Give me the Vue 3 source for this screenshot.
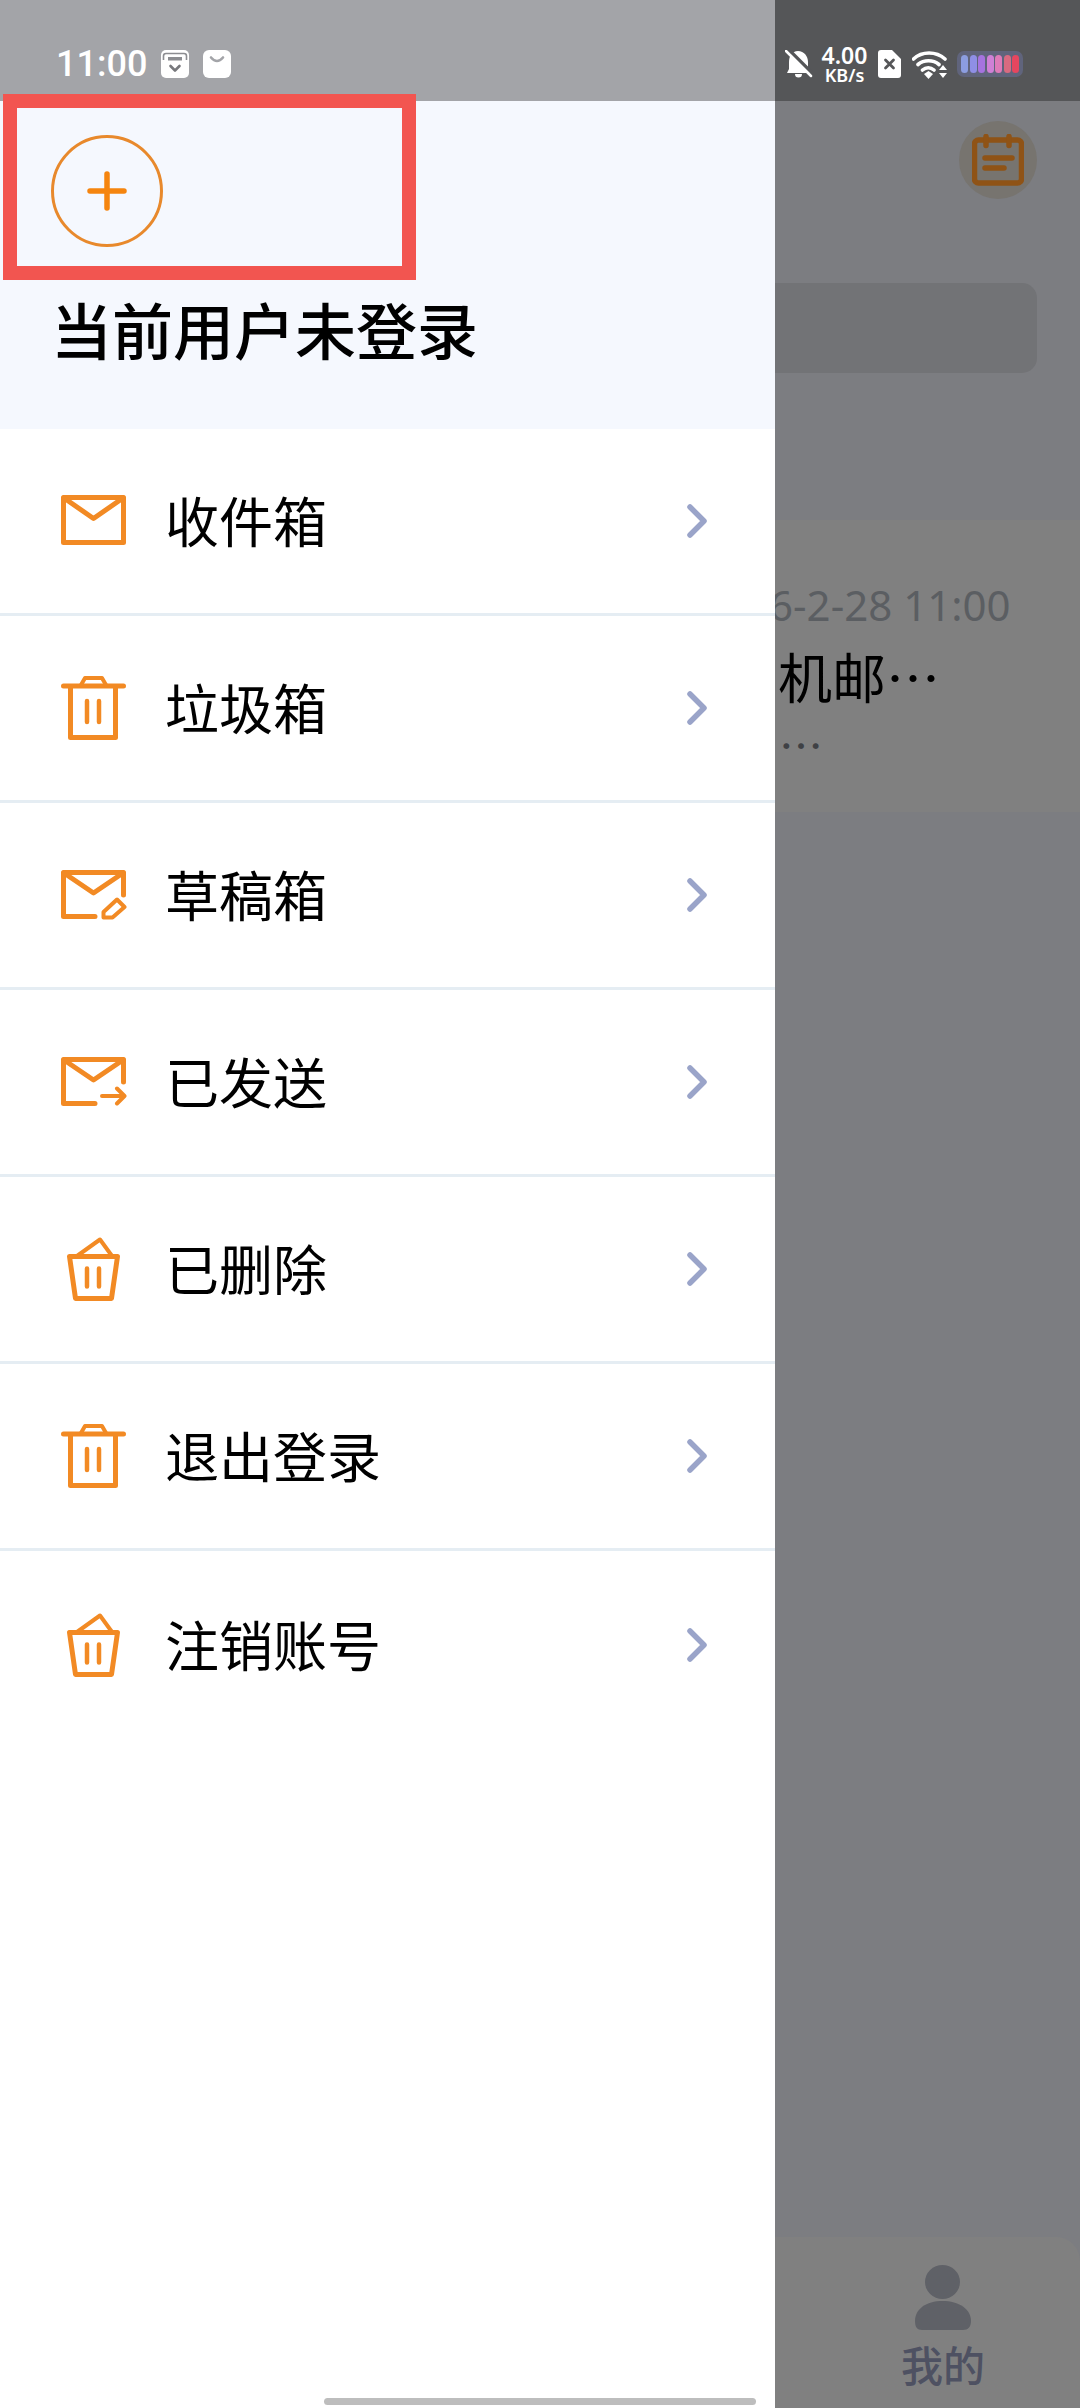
<script setup>
const menu = [
  { label: '收件箱', icon: 'mail' },
  { label: '垃圾箱', icon: 'trash' },
  { label: '草稿箱', icon: 'draft' },
  { label: '已发送', icon: 'sent' },
  { label: '已删除', icon: 'basket' },
  { label: '退出登录', icon: 'trash' },
  { label: '注销账号', icon: 'basket' }
]
const batteryBars = ['#8c9de0', '#8f8fe6', '#a673df', '#cf80d6', '#de7bb9', '#d96a80', '#e6465f']
</script>

<template>
  <div class="screen">
    <!-- page behind the drawer, already dimmed -->
    <div class="page">
      <div class="page-status"></div>
      <div class="page-head">
        <div class="cal-btn">
          <svg width="52" height="52" viewBox="0 0 52 52" fill="none" stroke="#8f5316" stroke-width="5.500" stroke-linecap="round" stroke-linejoin="round">
            <rect x="2.500" y="6" width="47" height="43" rx="4" />
            <path d="M14 2.500v9M37 2.500v9M13 24h27M13 34h19" />
          </svg>
        </div>
      </div>
      <div class="search"></div>
      <div class="card">
        <div class="card-date">2026-2-28 11:00</div>
        <div class="card-title">机邮…</div>
        <div class="card-sub">…</div>
      </div>
      <div class="tabbar">
        <div class="tab">
          <svg width="58" height="66" viewBox="0 0 58 66" fill="#5f6167">
            <ellipse cx="28.500" cy="17" rx="17.500" ry="17" />
            <path d="M1 56C1 44 12 36 28.500 36S57 44 57 56c0 6-3 9-8 9H8c-5 0-7-3-7-9z" />
          </svg>
          <span>我的</span>
        </div>
      </div>
    </div>

    <!-- drawer -->
    <div class="drawer">
      <div class="drawer-status"></div>
      <div class="drawer-head">
        <div class="add-btn">
          <svg width="40" height="40" viewBox="0 0 40 40" fill="none" stroke="#f5850f" stroke-width="5.500" stroke-linecap="round">
            <path d="M20 3v34M3 20h34" />
          </svg>
        </div>
        <div class="drawer-title">当前用户未登录</div>
      </div>
      <div class="menu">
        <div v-for="m in menu" :key="m.label" class="menu-row">
          <svg class="menu-icon" width="66" height="66" viewBox="0 0 66 66" fill="none" stroke="#f28a24" stroke-width="5" stroke-linecap="round" stroke-linejoin="round">
            <template v-if="m.icon === 'mail'">
              <rect x="2.500" y="9.500" width="60" height="45" />
              <path d="M3 10l29.500 20.500L62 10" />
            </template>
            <template v-else-if="m.icon === 'trash'">
              <path d="M2.500 11h60M9.500 11v51.500h45V11" />
              <path d="M20 10l4-7h17l4 7" stroke-width="4" />
              <path d="M26 26v21M38 26v21" stroke-width="4.500" />
            </template>
            <template v-else-if="m.icon === 'draft'">
              <path d="M62.500 33V10.500h-60v44H34" />
              <path d="M3 11l29.500 20L62 11" />
              <path d="M42.500 55.500v-5.500l13.500-12.500 7.500 7.500-12 10.500z" stroke-width="4" />
            </template>
            <template v-else-if="m.icon === 'sent'">
              <path d="M62.500 33V10.500h-60v44H34" />
              <path d="M3 11l29.500 20L62 11" />
              <path d="M41 47h22M56 39.500l7.500 7.500-7.500 7.500" stroke-width="4" />
            </template>
            <template v-else>
              <path d="M8.500 20.500h48l-6 42h-36z" />
              <path d="M16 20L39 3.500 51 20" stroke-width="4" />
              <path d="M26 32.500v18M38 32.500v18" stroke-width="4.500" />
            </template>
          </svg>
          <span class="menu-label">{{ m.label }}</span>
          <svg class="menu-arrow" width="24" height="36" viewBox="0 0 24 36" fill="none" stroke="#9aa4c9" stroke-width="5.500" stroke-linecap="round" stroke-linejoin="round">
            <path d="M5 4l14 14L5 32" />
          </svg>
        </div>
      </div>
      <div class="home-bar"></div>
    </div>

    <!-- red annotation box -->
    <div class="mark"></div>

    <!-- status bar -->
    <div class="status">
      <span class="time">11:00</span>
      <svg class="st-a" width="28" height="28" viewBox="0 0 28 28">
        <rect width="28" height="28" rx="5" fill="#fff" />
        <path d="M2.500 10V6q0-2.500 2.500-2.500h18q2.500 0 2.500 2.500v4" fill="none" stroke="#8c8d91" stroke-width="1.600" />
        <rect x="7" y="7" width="14" height="3.500" fill="#8c8d91" />
        <path d="M9.500 16l4.500 4.500 4.500-4.500" fill="none" stroke="#77787c" stroke-width="2.600" stroke-linecap="round" stroke-linejoin="round" />
      </svg>
      <svg class="st-b" width="28" height="28" viewBox="0 0 28 28">
        <rect width="28" height="28" rx="6" fill="#fff" />
        <path d="M8 7.500q6 7 12 0" fill="none" stroke="#a3a4a8" stroke-width="2.600" stroke-linecap="round" />
      </svg>
      <div class="status-right">
        <svg width="28" height="28" viewBox="0 0 28 28" fill="#fff">
          <path d="M13 1c6 0 10 5 10 11v7l3 4H2l2-4v-7C4 6 7 1 13 1zM10 24h7a3.500 3.500 0 0 1-7 0z" />
          <path d="M3 -1l26 26" stroke="#555658" stroke-width="3.500" />
          <path d="M1 1l25 25" stroke="#fff" stroke-width="2.500" stroke-linecap="round" />
        </svg>
        <div class="speed">
          <span class="speed-num">4.00</span>
          <span class="speed-unit">KB/s</span>
        </div>
        <svg width="23" height="28" viewBox="0 0 23 28">
          <path d="M3 0h11l9 9v16q0 3-3 3H3q-3 0-3-3V3q0-3 3-3z" fill="#fff" />
          <path d="M7.500 10l8 8M15.500 10l-8 8" stroke="#555658" stroke-width="2.800" stroke-linecap="round" />
        </svg>
        <svg width="35" height="28" viewBox="0 0 35 28" fill="none" stroke="#fff" stroke-width="3.600" stroke-linecap="round">
          <path d="M1.500 8C10 0 24 0 33 8M6 13.500c6-5 15-5 21 0M10.500 19c3.500-3 8-3 11.500 0" />
          <path d="M12 23l4.500-3 4.500 3-4.500 5z" fill="#fff" stroke="none" />
          <path d="M27 19l4-5 4 5zM27 22h8l-4 5z" fill="#fff" stroke="none" />
        </svg>
        <div class="battery">
          <i v-for="c in batteryBars" :key="c" :style="{ background: c }"></i>
        </div>
      </div>
    </div>
  </div>
</template>

<style scoped>
.screen { position: relative; width: 1080px; height: 2408px; overflow: hidden; font-family: "Noto Sans", "Noto Sans CJK SC", sans-serif; }

.page { height: 2408px; display: flex; flex-direction: column; background: #7c7d81; }
.page-status { height: 101px; background: #555658; flex: none; }
.page-head { display: flex; justify-content: flex-end; padding: 20px 43px 0; }
.cal-btn { width: 78px; height: 78px; border-radius: 50%; background: #77746f; display: flex; align-items: center; justify-content: center; }
.search { margin: 84px 43px 0; height: 90px; background: #727376; border-radius: 15px; }
.card { margin-top: 147px; height: 292px; box-sizing: border-box; padding: 55px 68px 0 697px; background: #808080; }
.card-date { font-size: 42px; line-height: 60px; color: #5b5e62; white-space: nowrap; }
.card-title { font-family: "Noto Sans CJK SC", sans-serif; font-size: 54px; line-height: 76px; color: #000; padding-left: 81px; margin-top: 3px; white-space: nowrap; }
.card-sub { font-family: "Noto Sans CJK SC", sans-serif; font-size: 44px; line-height: 56px; color: #3f4145; padding-left: 82px; margin-top: 2px; white-space: nowrap; }
.tabbar { margin-top: auto; height: 171px; background: #808080; border-top-right-radius: 24px; display: flex; justify-content: flex-end; }
.tab { width: 274px; display: flex; flex-direction: column; align-items: center; padding-top: 28px; box-sizing: border-box; }
.tab span { font-family: "Noto Sans CJK SC", sans-serif; font-size: 42px; line-height: 52px; font-weight: 500; color: #4e5162; margin-top: 7px; }

.drawer { position: absolute; left: 0; top: 0; width: 775px; height: 2408px; background: #fff; }
.drawer-status { height: 101px; background: #a3a4a8; }
.drawer-head { height: 328px; box-sizing: border-box; padding: 34px 0 0 51px; background: #f5f8fe; }
.add-btn { width: 112px; height: 112px; box-sizing: border-box; border: 3px solid #e8892c; border-radius: 50%; display: flex; align-items: center; justify-content: center; }
.drawer-title { margin-top: 40px; font-family: "Noto Sans CJK SC", sans-serif; font-size: 61px; line-height: 84px; font-weight: 500; color: #000; }
.menu-row { height: 187px; box-sizing: border-box; border-bottom: 3px solid #e5edf3; padding-left: 61px; display: flex; align-items: center; }
.menu-row:last-child { border-bottom: none; }
.menu-icon { flex: none; }
.menu-label { margin-left: 38px; margin-top: -3px; font-family: "Noto Sans CJK SC", sans-serif; font-size: 54px; color: #000; }
.menu-arrow { margin-left: auto; margin-right: 66px; flex: none; }
.home-bar { position: absolute; left: 324px; top: 2398px; width: 432px; height: 7px; border-radius: 4px; background: #bdbdbd; }

.mark { position: absolute; left: 3px; top: 94px; width: 413px; height: 186px; box-sizing: border-box; border: 14px solid #f25550; }

.status { position: absolute; left: 0; top: 0; width: 1080px; height: 101px; display: flex; align-items: flex-start; padding: 50px 56px 0; box-sizing: border-box; color: #fff; }
.time { font-family: Roboto, sans-serif; font-weight: 500; font-size: 36px; line-height: 28px; width: 105px; }
.st-b { margin-left: 14px; }
.status-right { position: absolute; left: 785px; top: 47px; display: flex; align-items: flex-start; }
.status-right > svg:nth-child(1) { margin-top: 3px; }
.speed { margin: -2px 0 0 8px; width: 47px; display: flex; flex-direction: column; align-items: center; font-weight: 600; font-family: "Noto Sans", sans-serif; }
.speed-num { font-size: 23px; line-height: 20px; }
.speed-unit { font-size: 18px; line-height: 20px; }
.status-right > svg:nth-child(3) { margin: 3px 0 0 10px; }
.status-right > svg:nth-child(4) { margin: 4px 0 0 11px; }
.battery { margin: 4px 0 0 10px; width: 66px; height: 26px; box-sizing: border-box; padding: 4px; border-radius: 7px; background: #60647c; display: flex; justify-content: space-between; }
.battery i { width: 7px; border-radius: 4px; }
</style>
